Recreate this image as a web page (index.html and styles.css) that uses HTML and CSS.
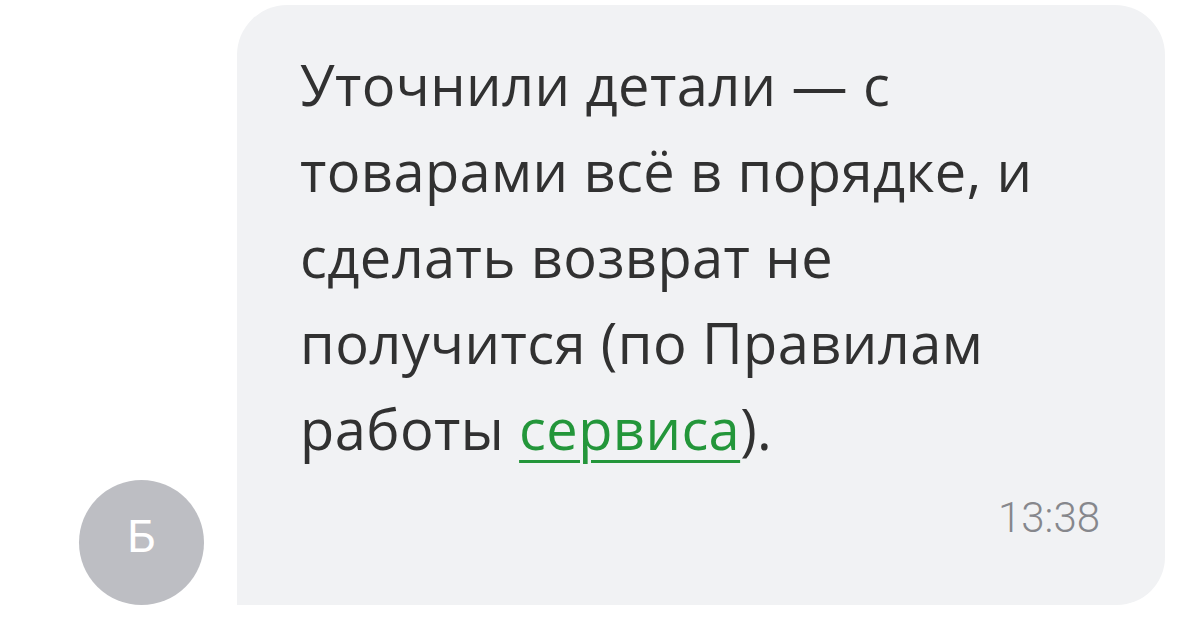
FILE: index.html
```html
<!DOCTYPE html>
<html lang="ru">
<head>
<meta charset="utf-8">
<link rel="stylesheet" href="styles.css">
</head>
<body>
<div class="chat-row">
  <div class="avatar">Б</div>
  <div class="bubble">
    <p class="message">Уточнили детали — с товарами всё в порядке, и сделать возврат не получится (по Правилам работы <a class="link" href="#">сервиса</a>).</p>
    <div class="time">13:38</div>
  </div>
</div>
</body>
</html>
```

FILE: styles.css
```css
html, body {
  margin: 0;
  padding: 0;
  background: #ffffff;
}
body {
  width: 1200px;
  height: 617px;
  overflow: hidden;
  font-family: "Open Sans", "Noto Sans", sans-serif;
}
.chat-row {
  display: flex;
  align-items: flex-end;
  gap: 33px;
  padding: 5px 35px 0 79px;
  height: 600px;
}
.avatar {
  flex: 0 0 125px;
  width: 125px;
  height: 125px;
  border-radius: 50%;
  background: #bdbec3;
  color: #ffffff;
  display: flex;
  align-items: center;
  justify-content: center;
  font-family: "Roboto", "Open Sans", sans-serif;
  font-weight: 400;
  font-size: 45px;
  padding-bottom: 12px;
  box-sizing: border-box;
}
.bubble {
  flex: 1 1 auto;
  height: 600px;
  box-sizing: border-box;
  background: #f1f2f4;
  border-radius: 50px 50px 48px 0;
  padding: 36px 65px 0 63px;
}
.message {
  margin: 0;
  font-size: 56px;
  line-height: 86px;
  letter-spacing: 0.4px;
  color: #313131;
}
.link {
  color: #23963a;
  text-decoration: underline;
  text-decoration-thickness: 3px;
  text-underline-offset: 10px;
}
.time {
  margin-top: 22px;
  text-align: right;
  font-family: "Roboto", sans-serif;
  font-weight: 300;
  font-size: 42px;
  color: #86878c;
}
```
